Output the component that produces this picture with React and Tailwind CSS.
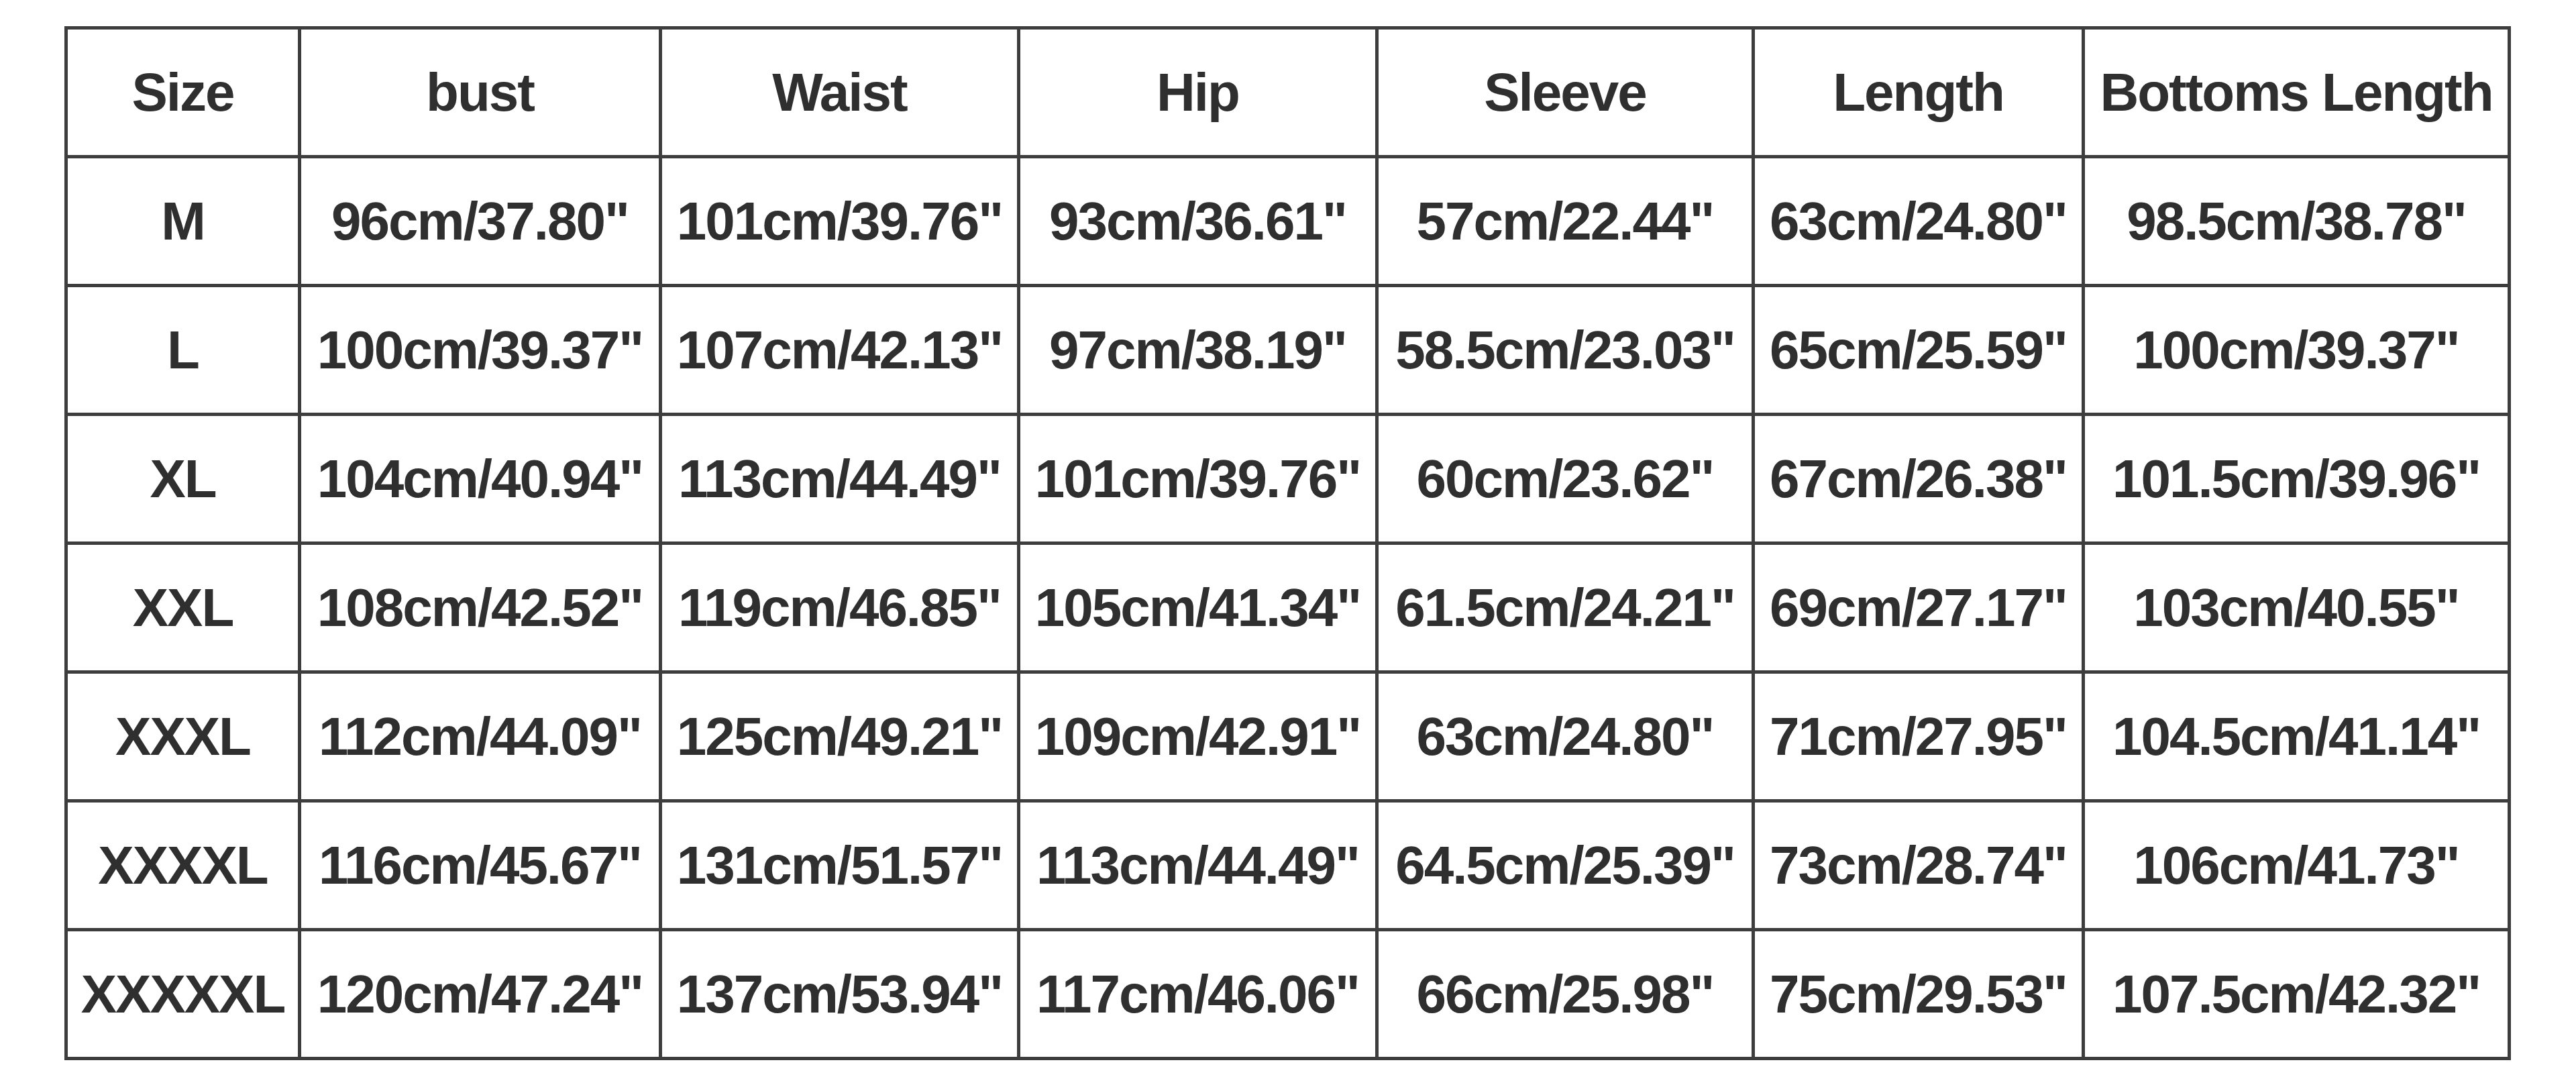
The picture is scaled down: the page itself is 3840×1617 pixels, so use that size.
const HEADERS = ["Size", "bust", "Waist", "Hip", "Sleeve", "Length", "Bottoms Length"];

const ROWS = [
  ["M", "96cm/37.80\"", "101cm/39.76\"", "93cm/36.61\"", "57cm/22.44\"", "63cm/24.80\"", "98.5cm/38.78\""],
  ["L", "100cm/39.37\"", "107cm/42.13\"", "97cm/38.19\"", "58.5cm/23.03\"", "65cm/25.59\"", "100cm/39.37\""],
  ["XL", "104cm/40.94\"", "113cm/44.49\"", "101cm/39.76\"", "60cm/23.62\"", "67cm/26.38\"", "101.5cm/39.96\""],
  ["XXL", "108cm/42.52\"", "119cm/46.85\"", "105cm/41.34\"", "61.5cm/24.21\"", "69cm/27.17\"", "103cm/40.55\""],
  ["XXXL", "112cm/44.09\"", "125cm/49.21\"", "109cm/42.91\"", "63cm/24.80\"", "71cm/27.95\"", "104.5cm/41.14\""],
  ["XXXXL", "116cm/45.67\"", "131cm/51.57\"", "113cm/44.49\"", "64.5cm/25.39\"", "73cm/28.74\"", "106cm/41.73\""],
  ["XXXXXL", "120cm/47.24\"", "137cm/53.94\"", "117cm/46.06\"", "66cm/25.98\"", "75cm/29.53\"", "107.5cm/42.32\""],
];

function Cell({ children }) {
  return (
    <div className="bg-white h-[187px] flex items-center justify-center whitespace-nowrap overflow-hidden">
      {children}
    </div>
  );
}

export default function App() {
  return (
    <div className="min-h-screen bg-white pt-[39px] pl-[96px] font-['Liberation_Sans',Arial,sans-serif] font-bold text-[80px] leading-none tracking-[-2px] text-[#2f2f2f]">
      {/* size chart */}
      <div className="inline-grid grid-cols-[343px_533px_529px_529px_556px_487px_630px] gap-[5px] p-[5px] bg-[#3d3d3d]">
        {HEADERS.map((h) => (
          <Cell key={h}>{h}</Cell>
        ))}
        {ROWS.map((row) =>
          row.map((v, i) => <Cell key={row[0] + i}>{v}</Cell>)
        )}
      </div>
    </div>
  );
}
